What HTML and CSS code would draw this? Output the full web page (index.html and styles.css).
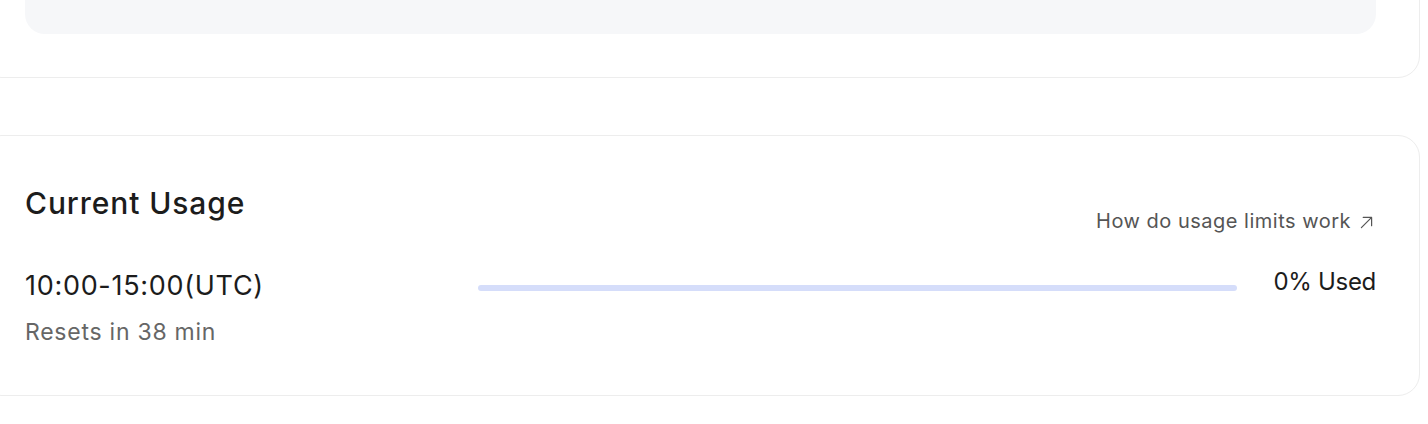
FILE: index.html
```html
<!DOCTYPE html>
<html>
<head>
<meta charset="utf-8">
<link rel="stylesheet" href="styles.css">
</head>
<body>
<div class="page">
  <section class="card card-top">
    <div class="inner-box"></div>
  </section>
  <section class="card card-usage">
    <div class="usage-head">
      <h2 class="usage-title">Current Usage</h2>
      <a class="usage-link" href="#">How do usage limits work
        <svg class="ext-icon" viewBox="0 0 14 14" width="13" height="13" aria-hidden="true"><path d="M1.5 12.5L12.5 1.5M3.5 1.5H12.5V10.5" fill="none" stroke="currentColor" stroke-width="1.3" stroke-linecap="round" stroke-linejoin="round"/></svg>
      </a>
    </div>
    <div class="usage-row">
      <div class="usage-window">
        <div class="window-time">10:00-15:00(UTC)</div>
        <div class="window-reset">Resets in 38 min</div>
      </div>
      <div class="bar"><div class="bar-fill" style="width:0%"></div></div>
      <div class="usage-pct">0% Used</div>
    </div>
  </section>
</div>
</body>
</html>
```
FILE: styles.css
```css
* { box-sizing: border-box; }
html, body { margin: 0; padding: 0; background: #ffffff; }
body {
  font-family: Inter, "Noto Sans", sans-serif;
  color: #1c1c1c;
  width: 1428px;
  height: 424px;
  overflow: hidden;
}
.page {
  margin-left: -20px;
  width: 1440px;
  display: flex;
  flex-direction: column;
  gap: 57px;
}
.card {
  border: 1px solid #ededed;
  border-radius: 22px;
  background: #fff;
  padding: 0 43px 0 44px;
}
.card-top {
  margin-top: -40px;
  height: 118px;
}
.inner-box {
  background: #f6f7f9;
  border-radius: 20px;
  height: 73px;
}
.card-usage {
  height: 261px;
  padding-top: 47px;
}
.usage-head {
  display: flex;
  justify-content: space-between;
  align-items: flex-start;
}
.usage-title {
  margin: 0;
  font-size: 30px;
  font-weight: 500;
  line-height: 40px;
  letter-spacing: 0.9px;
}
.usage-link {
  margin-top: 25px;
  margin-right: 3px;
  color: #555;
  text-decoration: none;
  font-size: 20px;
  line-height: 26px;
  letter-spacing: 0.5px;
  display: flex;
  align-items: center;
  gap: 9px;
}
.ext-icon { color: #555; margin-top: 2px; flex: none; }
.usage-row {
  margin-top: 35px;
  display: flex;
  align-items: flex-start;
}
.usage-window { width: 453px; flex: none; }
.window-time {
  font-size: 27px;
  line-height: 34px;
  letter-spacing: 0.7px;
}
.window-reset {
  margin-top: 15px;
  font-size: 23px;
  line-height: 28px;
  letter-spacing: 0.75px;
  color: #666;
}
.bar {
  flex: 1;
  height: 6px;
  margin-top: 16px;
  background: #d5ddfa;
  border-radius: 3px;
  overflow: hidden;
}
.bar-fill { height: 100%; background: #4f6ef7; }
.usage-pct {
  margin-left: 36px;
  margin-top: -2px;
  font-size: 24px;
  line-height: 30px;
  letter-spacing: -0.3px;
}
```
